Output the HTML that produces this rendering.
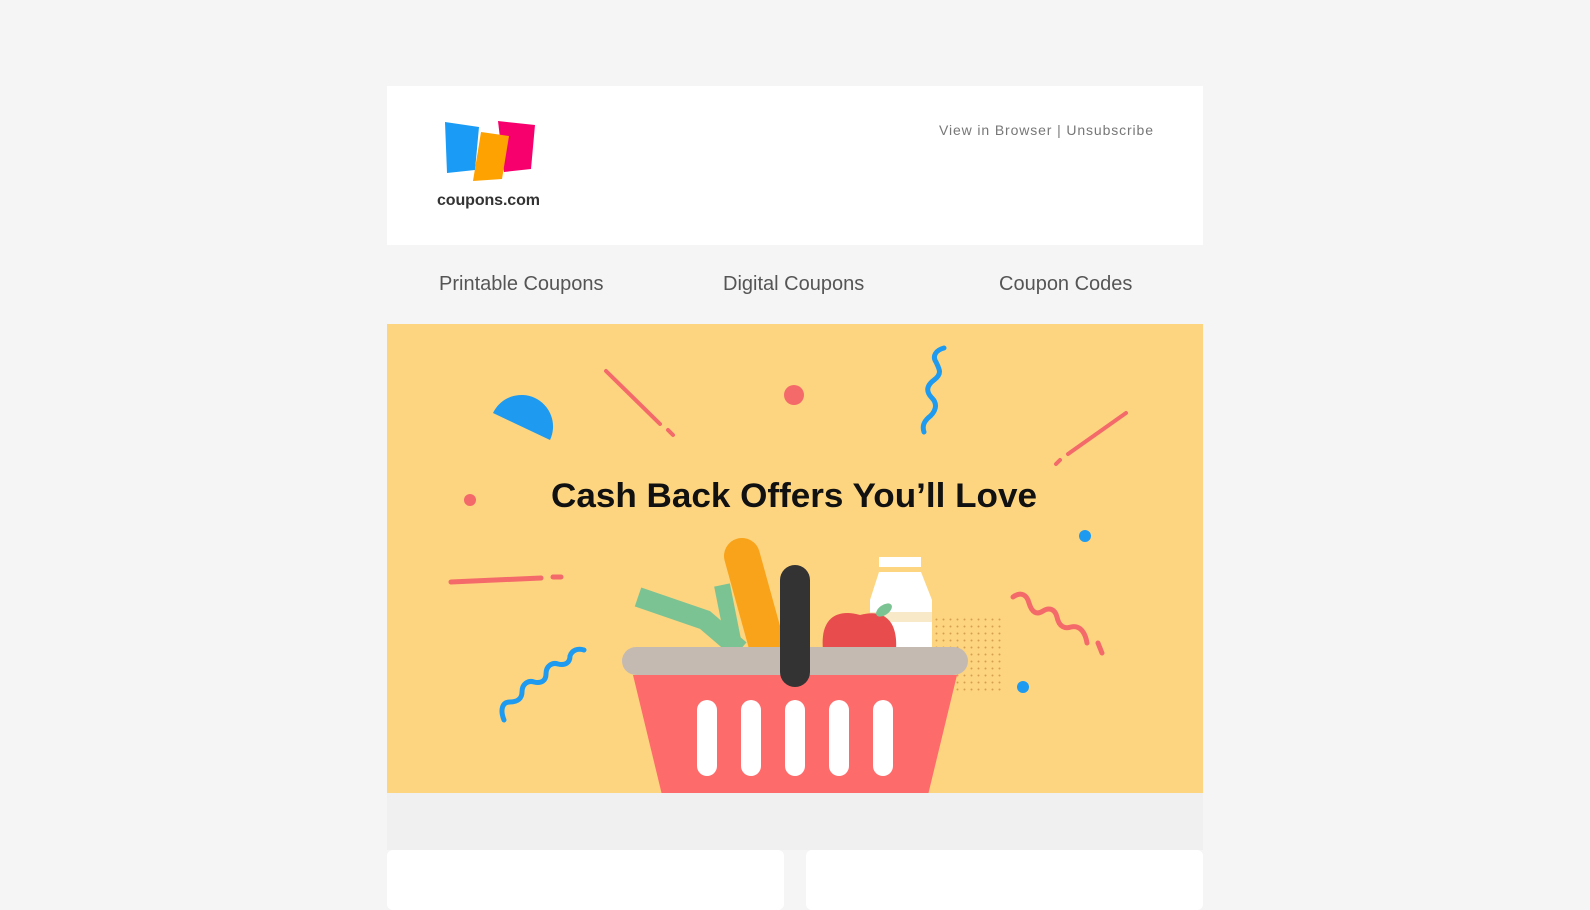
<!DOCTYPE html>
<html><head><meta charset="utf-8"><style>
html,body{margin:0;padding:0;background:#f5f5f5;width:1590px;height:903px;overflow:hidden;font-family:"Liberation Sans",sans-serif}
.wrap{position:absolute;left:387px;top:86px;width:816px}
.head{height:159px;background:#fff;position:relative}
.nav{height:79px;background:#f5f5f5;position:relative}
.nav span{position:absolute;top:28px;font-size:20px;color:#555}
.ban{height:469px;background:#fdd580;position:relative}
.gap{height:57px;background:#f0f0f0}
.card{position:absolute;top:850px;height:60px;background:#fff;border-radius:6px}
</style></head><body>
<div class="wrap">
 <div class="head">
  <svg width="816" height="159" style="position:absolute;left:0;top:0">
   <g transform="translate(-387,-86)">
    <polygon points="445,122 479,127 475,170 447,173" fill="#1a9bf5"/>
    <polygon points="498,121 535,125 531,169 504,172" fill="#f7006e"/>
    <polygon points="481,132 509,136 502,179 473,181" fill="#fda200"/>
    <text x="437" y="205" font-size="16" font-weight="bold" fill="#333" textLength="103" font-family="Liberation Sans">coupons.com</text>
    <text x="939" y="135" font-size="14" fill="#777" textLength="214" font-family="Liberation Sans">View in Browser  |  Unsubscribe</text>
   </g>
  </svg>
 </div>
 <div class="nav">
  <span style="left:52px">Printable Coupons</span>
  <span style="left:336px">Digital Coupons</span>
  <span style="left:612px">Coupon Codes</span>
 </div>
 <div class="ban">
  <svg width="816" height="469" style="position:absolute;left:0;top:0">
   <g transform="translate(-387,-324)">
    <path d="M493 413 A31.5 31.5 0 0 1 550 440 Z" fill="#1e9bf0"/>
    <g stroke="#f46a6a" stroke-width="4" stroke-linecap="round" fill="none">
     <line x1="606" y1="371" x2="660" y2="424"/><line x1="668" y1="430" x2="673" y2="435"/>
     <line x1="1126" y1="413" x2="1068" y2="454"/><line x1="1060" y1="460" x2="1056" y2="464"/>
     <line x1="451" y1="582" x2="541" y2="578" stroke-width="5"/><line x1="553" y1="577" x2="561" y2="577" stroke-width="5"/>
     <path d="M1013 597 c8 -6 14 -2 16 6 c3 10 8 12 14 8 c6 -4 12 -2 14 6 c2 10 8 12 14 10 c8 -2 14 4 16 16 M1098 643 l4 10" stroke-width="5"/>
    </g>
    <circle cx="794" cy="395" r="10" fill="#f46a6a"/>
    <circle cx="470" cy="500" r="6" fill="#f46a6a"/>
    <circle cx="1085" cy="536" r="6" fill="#1e9bf0"/>
    <circle cx="1023" cy="687" r="6" fill="#1e9bf0"/>
    <g stroke="#1e9bf0" stroke-width="5" stroke-linecap="round" fill="none">
     <path d="M944 348 c-8 2 -12 8 -8 14 c4 8 6 12 -2 18 c-8 6 -8 12 -2 18 c6 6 4 14 -4 20 c-4 4 -6 8 -4 14"/>
     <path d="M504 720 c-4 -10 -2 -18 6 -18 c8 0 12 -4 12 -10 c0 -8 6 -12 12 -10 c8 2 12 -2 12 -8 c0 -8 6 -12 12 -10 c8 2 12 -2 12 -8 c2 -6 8 -8 14 -6"/>
    </g>
    <text x="794" y="507" text-anchor="middle" font-size="34" font-weight="bold" fill="#111" textLength="486" lengthAdjust="spacingAndGlyphs" font-family="Liberation Sans">Cash Back Offers You’ll Love</text>
    <g fill="#d4a050">
     <pattern id="d" x="935" y="618" width="7" height="7" patternUnits="userSpaceOnUse"><circle cx="1.5" cy="1.5" r="1"/></pattern>
     <rect x="935" y="618" width="68" height="75" fill="url(#d)"/>
    </g>
    <path d="M638 597 L705 620 L740 650" stroke="#7cc394" stroke-width="20" fill="none"/>
    <line x1="722" y1="585" x2="735" y2="650" stroke="#7cc394" stroke-width="16"/>
    <line x1="742" y1="556" x2="768" y2="650" stroke="#f9a31a" stroke-width="36" stroke-linecap="round"/>
    <rect x="879" y="557" width="42" height="10" fill="#fff"/>
    <path d="M879 572 L921 572 L932 600 L932 650 L870 650 L870 600 Z" fill="#fff"/>
    <rect x="870" y="612" width="62" height="10" fill="#f8e9c8"/>
    <path d="M823 650 C820 620 835 608 860 615 C885 608 898 622 896 650 Z" fill="#e84c4c"/>
    <ellipse cx="884" cy="610" rx="9" ry="5" fill="#7cc394" transform="rotate(-35 884 610)"/>
    <path d="M633 675 L957 675 L928 795 L662 795 Z" fill="#fe6b6b"/>
    <rect x="622" y="647" width="346" height="28" rx="14" fill="#c4bab2"/>
    <g fill="#fff">
     <rect x="697" y="700" width="20" height="76" rx="10"/><rect x="741" y="700" width="20" height="76" rx="10"/>
     <rect x="785" y="700" width="20" height="76" rx="10"/><rect x="829" y="700" width="20" height="76" rx="10"/>
     <rect x="873" y="700" width="20" height="76" rx="10"/>
    </g>
    <rect x="780" y="565" width="30" height="122" rx="15" fill="#333"/>
   </g>
  </svg>
 </div>
 <div class="gap"></div>
</div>
<div class="card" style="left:387px;width:397px"></div>
<div class="card" style="left:806px;width:397px"></div>
</body></html>
